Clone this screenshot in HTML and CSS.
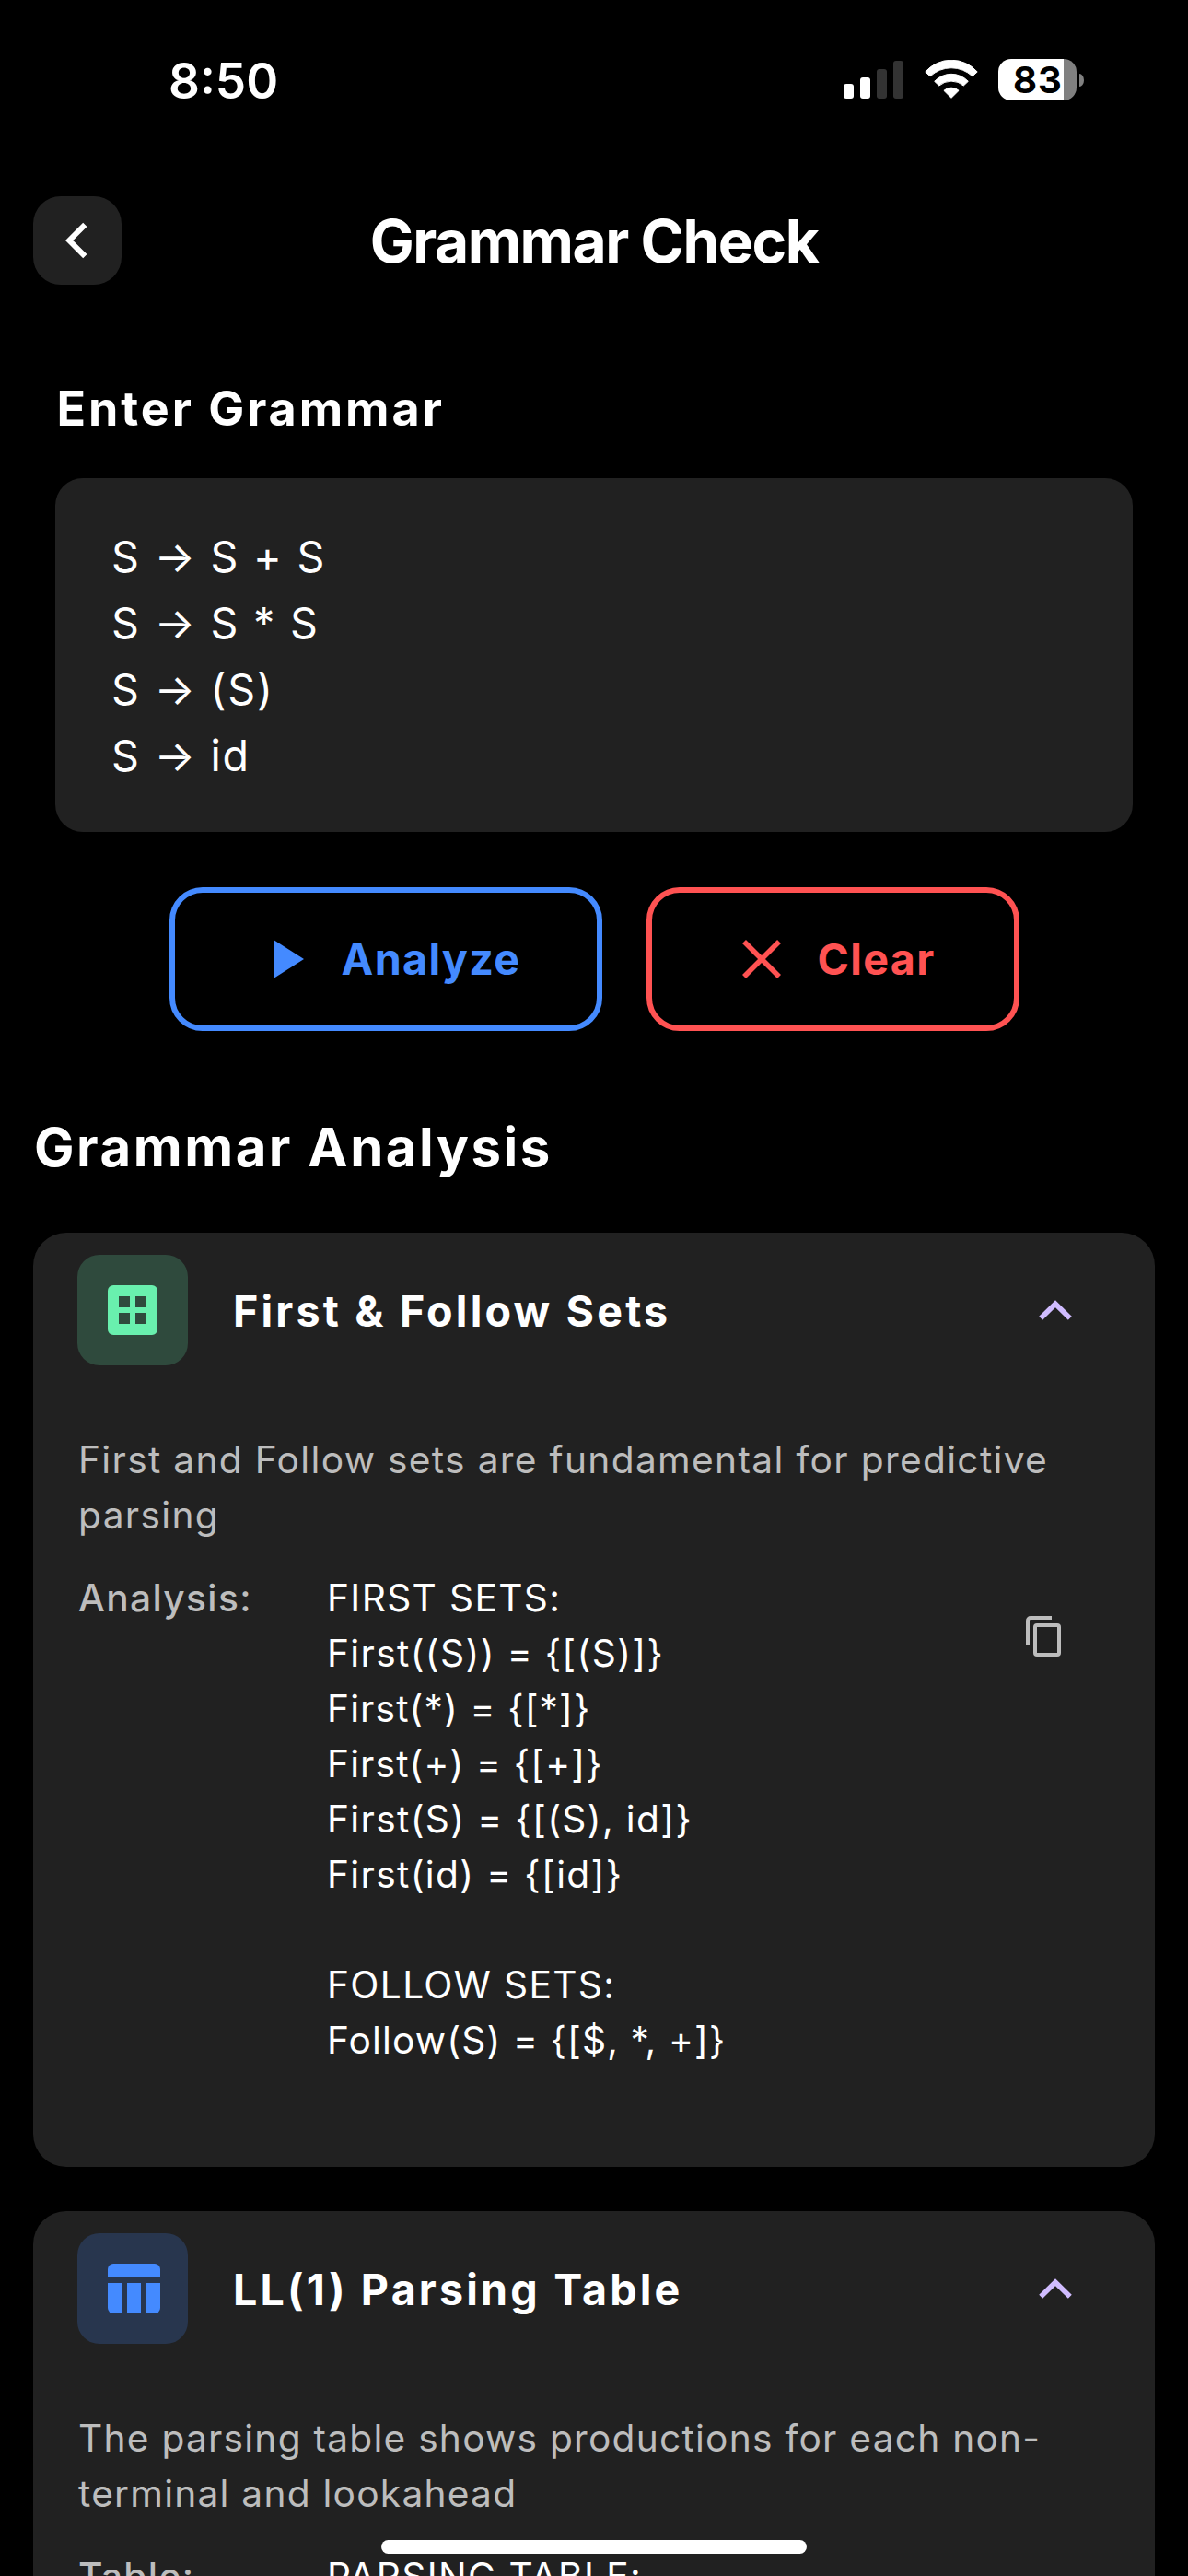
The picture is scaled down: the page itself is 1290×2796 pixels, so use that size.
FILE: index.html
```html
<!DOCTYPE html>
<html lang="en">
<head>
<meta charset="utf-8">
<title>Grammar Check</title>
<link rel="stylesheet" href="styles.css">
</head>
<body>
<div class="screen">
  <div class="status-bar">
    <div class="time">8:50</div>
    <div class="status-icons">
      <svg class="signal" width="65" height="41" viewBox="0 0 65 41">
        <rect x="0" y="25" width="11" height="16" rx="3" fill="#fff"/>
        <rect x="18" y="18" width="11" height="23" rx="3" fill="#fff"/>
        <rect x="36" y="9" width="11" height="32" rx="3" fill="#333"/>
        <rect x="54" y="0" width="11" height="41" rx="3" fill="#333"/>
      </svg>
      <svg class="wifi" width="58" height="42" viewBox="0 0 58 42">
        <g fill="#fff" stroke="#fff" stroke-width="1" stroke-linejoin="round">
          <path d="M.8 13A37.5 37.5 0 0 1 57.2 13L51.9 17.8A33.5 33.5 0 0 0 6.1 17.8Z"/>
          <path d="M10.7 23.3A25 25 0 0 1 47.3 23.3L42.3 28A20.5 20.5 0 0 0 15.7 28Z"/>
          <path d="M20.9 33.3A12 12 0 0 1 37.1 33.3L29 41.3Z"/>
        </g>
      </svg>
      <div class="battery">
        <div class="battery-body"><span class="battery-level">83</span></div>
        <div class="battery-nub"></div>
      </div>
    </div>
  </div>

  <header class="app-bar">
    <div class="back">
      <svg width="24" height="40" viewBox="0 0 24 40"><path d="M21.3 2.8L4.2 20l17.1 17.2" fill="none" stroke="#fff" stroke-width="6"/></svg>
    </div>
    <h1 class="app-title">Grammar Check</h1>
  </header>

  <section class="editor">
    <h2 class="editor-title">Enter Grammar</h2>
    <div class="grammar-input">
      <div>S → S + S</div>
      <div>S → S * S</div>
      <div>S → (S)</div>
      <div>S → id</div>
    </div>
    <div class="actions">
      <div class="button analyze">
        <svg width="33" height="42" viewBox="0 0 33 42"><path d="M0 0L33 21L0 42Z" fill="#448aff"/></svg>
        <span>Analyze</span>
      </div>
      <div class="button clear">
        <svg width="42" height="42" viewBox="0 0 42 42"><path d="M2 2L40 40M40 2L2 40" stroke="#ff5252" stroke-width="5.6"/></svg>
        <span>Clear</span>
      </div>
    </div>
  </section>

  <section class="results">
    <h2 class="results-title">Grammar Analysis</h2>
    <article class="card">
      <div class="card-head">
        <div class="tile tile-green">
          <svg width="54" height="54" viewBox="0 0 54 54"><path fill="#69f0ae" fill-rule="evenodd" d="M6 0H48a6 6 0 0 1 6 6V48a6 6 0 0 1-6 6H6a6 6 0 0 1-6-6V6a6 6 0 0 1 6-6ZM12 12V24H24V12ZM30 12V24H42V12ZM12 30V42H24V30ZM30 30V42H42V30Z"/></svg>
        </div>
        <h3 class="card-title">First &amp; Follow Sets</h3>
        <svg class="chevron" width="36" height="22" viewBox="0 0 36 22"><path d="M2.2 19.8L18 4.2L33.8 19.8" fill="none" stroke="#d0bcff" stroke-width="5.6"/></svg>
      </div>
      <p class="desc">First and Follow sets are fundamental for predictive<br>parsing</p>
      <div class="entry">
        <div class="label">Analysis:</div>
        <div class="value">
          <div>FIRST SETS:</div>
          <div>First((S)) = {[(S)]}</div>
          <div class="tight">First(*) = {[*]}</div>
          <div class="tight">First(+) = {[+]}</div>
          <div>First(S) = {[(S), id]}</div>
          <div>First(id) = {[id]}</div>
          <div>&nbsp;</div>
          <div>FOLLOW SETS:</div>
          <div class="tight">Follow(S) = {[$, *, +]}</div>
        </div>
        <svg class="copy" width="38" height="44" viewBox="0 0 38 44" fill="none" stroke="#bdbdbd" stroke-width="4"><path d="M2 32V5a3 3 0 0 1 3-3H28"/><rect x="10" y="10" width="26" height="32" rx="2"/></svg>
      </div>
    </article>

    <article class="card">
      <div class="card-head">
        <div class="tile tile-blue">
          <svg width="57" height="54" viewBox="0 0 57 54" fill="#448aff"><path d="M6 0H51a6 6 0 0 1 6 6V15H0V6a6 6 0 0 1 6-6Z"/><path d="M0 21H15V54H6a6 6 0 0 1-6-6Z"/><path d="M21 21H36V54H21Z"/><path d="M42 21H57V48a6 6 0 0 1-6 6H42Z"/></svg>
        </div>
        <h3 class="card-title">LL(1) Parsing Table</h3>
        <svg class="chevron" width="36" height="22" viewBox="0 0 36 22"><path d="M2.2 19.8L18 4.2L33.8 19.8" fill="none" stroke="#d0bcff" stroke-width="5.6"/></svg>
      </div>
      <p class="desc">The parsing table shows productions for each non-<br>terminal and lookahead</p>
      <div class="entry">
        <div class="label">Table:</div>
        <div class="value"><div>PARSING TABLE:</div></div>
      </div>
    </article>
  </section>
  <div class="home-indicator"></div>
</div>
</body>
</html>
```
FILE: styles.css
```css
* { box-sizing: border-box; }
body {
  margin: 0;
  background: #000;
  color: #fff;
  font-family: Inter, "Liberation Sans", sans-serif;
}
h1, h2, h3, p { margin: 0; }
svg { display: block; flex: none; }
.screen {
  position: relative;
  width: 1290px;
  height: 2796px;
  overflow: hidden;
  background: #000;
  white-space: nowrap;
}

/* Status bar */
.status-bar {
  display: flex;
  justify-content: space-between;
  height: 213px;
  padding: 64px 113px 0 183px;
}
.time {
  height: 49px;
  font-size: 53px;
  font-weight: 600;
  line-height: 49px;
}
.status-icons { display: flex; align-items: flex-start; }
.signal { margin: 2px 23px 0 0; }
.wifi { margin: 1px 22px 0 0; }
.battery { display: flex; align-items: center; gap: 3px; }
.battery-body {
  width: 85px;
  height: 45px;
  padding-left: 16px;
  border-radius: 14px;
  background: linear-gradient(90deg, #fff 71px, #808080 71px);
  color: #000;
}
.battery-level {
  font-size: 40px;
  font-weight: 700;
  letter-spacing: 1px;
  line-height: 45px;
}
.battery-nub {
  width: 5px;
  height: 14px;
  border-radius: 0 5px 5px 0 / 0 7px 7px 0;
  background: #808080;
}

/* App bar */
.app-bar {
  display: grid;
  grid-template-columns: 96px 1fr 96px;
  align-items: center;
  height: 96px;
  padding: 0 36px;
}
.back {
  display: flex;
  align-items: center;
  height: 96px;
  padding-left: 35px;
  border-radius: 30px;
  background: #212121;
}
.app-title {
  padding-top: 2px;
  font-size: 64px;
  font-weight: 700;
  letter-spacing: -1.46px;
  line-height: 94px;
  text-align: center;
}

/* Editor */
.editor { padding: 102px 60px 0; }
.editor-title {
  padding-left: 1.5px;
  font-size: 52px;
  font-weight: 700;
  letter-spacing: 2.95px;
  line-height: 66px;
}
.grammar-input {
  margin-top: 42px;
  padding: 49px 61px 47px;
  border-radius: 30px;
  background: #212121;
  font-size: 46.6px;
  letter-spacing: 1.75px;
  line-height: 72px;
}
.actions {
  display: flex;
  justify-content: center;
  gap: 48px;
  margin-top: 60px;
}
.button {
  display: flex;
  align-items: center;
  height: 156px;
  border: 6px solid;
  border-radius: 36px;
  font-size: 46.6px;
  font-weight: 700;
  letter-spacing: 1.35px;
}
.analyze { width: 470px; padding-left: 107px; gap: 41px; color: #448aff; }
.clear { width: 405px; padding-left: 98px; gap: 40px; color: #ff5252; }

/* Results */
.results { padding: 90px 36px 0; }
.results-title {
  margin-bottom: 57px;
  padding-left: 1px;
  font-size: 58px;
  font-weight: 700;
  letter-spacing: 2.55px;
  line-height: 72px;
}
.card {
  margin-bottom: 48px;
  padding: 24px 48px 107px;
  border-radius: 36px;
  background: #212121;
}
.card-head { display: flex; align-items: center; }
.tile {
  width: 120px;
  height: 120px;
  padding: 33px;
  border-radius: 24px;
}
.tile-green { background: #2f4a3d; }
.tile-blue { background: #28364e; }
.card-title {
  flex: 1;
  margin-left: 49px;
  padding-top: 2px;
  font-size: 46.6px;
  font-weight: 700;
  letter-spacing: 3.18px;
}
.chevron { margin-right: 42px; }
.desc {
  margin-top: 73px;
  padding-left: 1px;
  color: #bdbdbd;
  font-size: 40.7px;
  letter-spacing: 1.32px;
  line-height: 60px;
}
.card + .card .desc { letter-spacing: 1.23px; }
.entry {
  display: flex;
  align-items: flex-start;
  margin-top: 30px;
  padding-left: 1px;
  font-size: 40.7px;
  letter-spacing: 1.34px;
  line-height: 60px;
}
.label { width: 270px; color: #bdbdbd; font-weight: 500; }
.value { flex: 1; }
.tight { letter-spacing: 1.12px; }
.copy { margin: 49px 54px 0 0; }

.home-indicator {
  position: absolute;
  left: 414px;
  top: 2757px;
  width: 462px;
  height: 15px;
  border-radius: 8px;
  background: #fff;
}
```
